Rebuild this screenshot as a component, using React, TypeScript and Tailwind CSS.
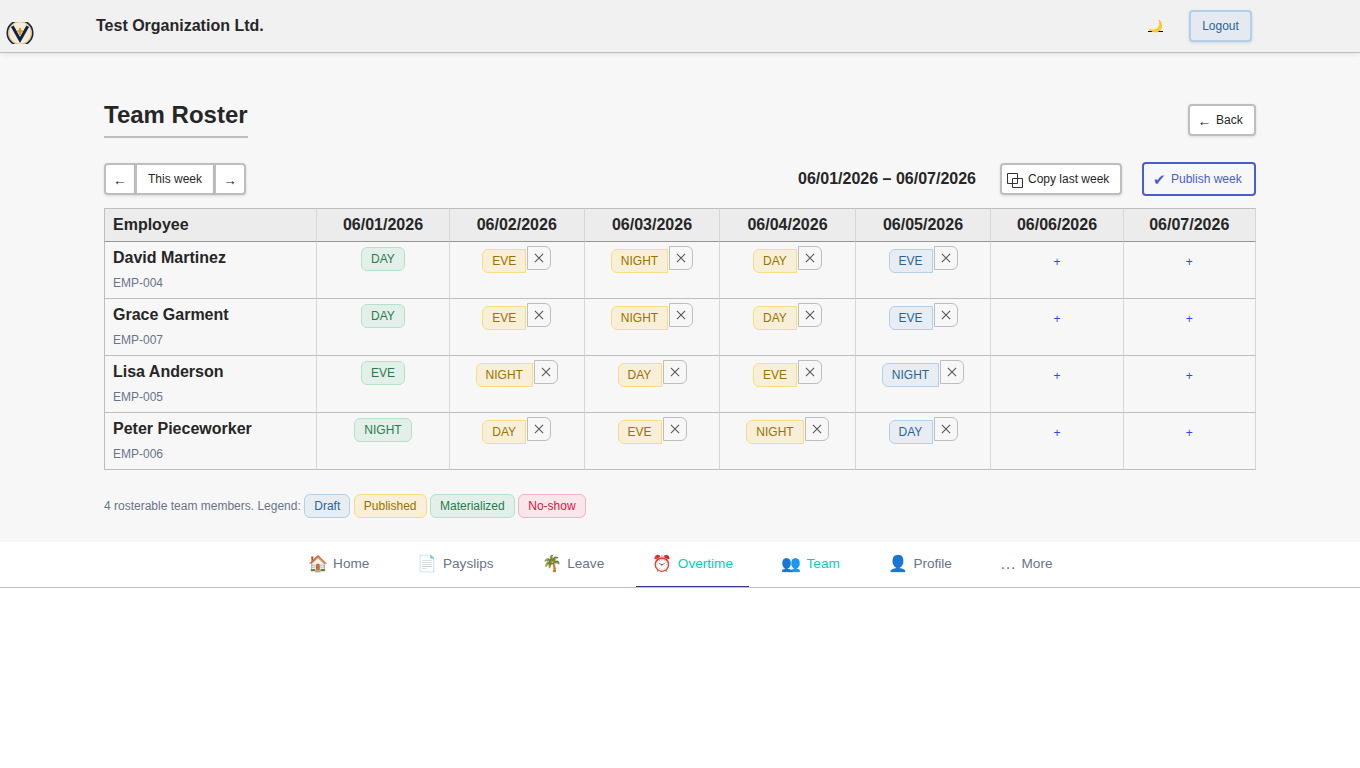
import clsx from 'clsx';
import type { ReactNode } from 'react';

type Status = 'draft' | 'published' | 'materialized' | 'noshow';

interface Shift {
  label: string;
  status: Status;
}

interface Employee {
  name: string;
  id: string;
  shifts: Array<Shift | null>;
}

const badgeStyles: Record<Status, string> = {
  draft: 'border-[#b0d0ec] bg-[#e8edf4] text-[#2a6496]',
  published: 'border-[#fbdc84] bg-[#f8efd9] text-[#9a7200]',
  materialized: 'border-[#b3e2cb] bg-[#e3f0e9] text-[#2a7a50]',
  noshow: 'border-[#f6b3c2] bg-[#f8e7ea] text-[#d9163f]',
};

const columns = [
  { date: '06/01/2026', width: 'w-[133px]', pad: 'p-0' },
  { date: '06/02/2026', width: 'w-[135px]', pad: 'p-0 pr-[0.5px]' },
  { date: '06/03/2026', width: 'w-[135px]', pad: 'p-0' },
  { date: '06/04/2026', width: 'w-[136px]', pad: 'p-0' },
  { date: '06/05/2026', width: 'w-[135px]', pad: 'p-0' },
  { date: '06/06/2026', width: 'w-[133px]', pad: 'p-0' },
  { date: '06/07/2026', width: 'w-[132px]', pad: 'p-0 pr-[0.5px]' },
];

const week = (labels: string[]): Array<Shift | null> => [
  { label: labels[0], status: 'materialized' },
  { label: labels[1], status: 'published' },
  { label: labels[2], status: 'published' },
  { label: labels[3], status: 'published' },
  { label: labels[4], status: 'draft' },
  null,
  null,
];

const employees: Employee[] = [
  { name: 'David Martinez', id: 'EMP-004', shifts: week(['DAY', 'EVE', 'NIGHT', 'DAY', 'EVE']) },
  { name: 'Grace Garment', id: 'EMP-007', shifts: week(['DAY', 'EVE', 'NIGHT', 'DAY', 'EVE']) },
  { name: 'Lisa Anderson', id: 'EMP-005', shifts: week(['EVE', 'NIGHT', 'DAY', 'EVE', 'NIGHT']) },
  { name: 'Peter Pieceworker', id: 'EMP-006', shifts: week(['NIGHT', 'DAY', 'EVE', 'NIGHT', 'DAY']) },
];

const legend: Shift[] = [
  { label: 'Draft', status: 'draft' },
  { label: 'Published', status: 'published' },
  { label: 'Materialized', status: 'materialized' },
  { label: 'No-show', status: 'noshow' },
];

const tabs = [
  { icon: '🏠', label: 'Home' },
  { icon: '📄', label: 'Payslips' },
  { icon: '🌴', label: 'Leave' },
  { icon: '⏰', label: 'Overtime', highlighted: true, active: true },
  { icon: '👥', label: 'Team', highlighted: true },
  { icon: '👤', label: 'Profile' },
  { icon: '…', label: 'More' },
];

function Logo() {
  return (
    <svg width="28" height="22" viewBox="0 0 28 22" className="block">
      <ellipse cx="14" cy="11" rx="12.7" ry="12.5" fill="#f6ead8" stroke="#14284b" strokeWidth="1.7" />
      <ellipse cx="14" cy="11" rx="11.4" ry="11.3" fill="none" stroke="#e2b565" strokeWidth="1" />
      <path d="M6.3 4.2L14 18L21.7 4.2" fill="none" stroke="#0c2448" strokeWidth="3" />
      <path d="M14 6v7M11.2 9.3h5.6" stroke="#d59a2c" strokeWidth="2.2" />
    </svg>
  );
}

function Badge({ label, status, className }: Shift & { className?: string }) {
  return (
    <span
      className={clsx(
        'inline-flex h-6 items-center border px-[9px] text-[12px] leading-none',
        className ?? 'rounded-[6px]',
        badgeStyles[status],
      )}
    >
      {label}
    </span>
  );
}

function ShiftCell({ shift }: { shift: Shift | null }) {
  if (!shift) {
    return <button className="mt-[11px] text-[12px] leading-[18px] text-[#2f45f5]">+</button>;
  }
  if (shift.status === 'materialized') {
    return (
      <div className="flex justify-center pt-[5px]">
        <Badge {...shift} />
      </div>
    );
  }
  return (
    <div className="flex items-start justify-center gap-px pt-1">
      <div className="flex pt-[3px]">
        <Badge {...shift} className={clsx('rounded-l-[6px]', shift.label !== 'NIGHT' && 'w-11')} />
      </div>
      <button className="flex size-6 items-center justify-center rounded-r-[6px] border border-[#bebebe]" aria-label="Remove shift">
        <svg width="10" height="10" viewBox="0 0 10 10" stroke="#555" strokeWidth="1.05">
          <path d="M.9 .9l8.2 8.2M9.1 .9l-8.2 8.2" />
        </svg>
      </button>
    </div>
  );
}

function Button({ className, children }: { className?: string; children: ReactNode }) {
  return (
    <button
      className={clsx(
        'flex h-8 items-center border-2 border-[#bebebe] bg-white text-[12px] leading-none text-[#262626] shadow-[0_1px_3px_rgba(0,0,0,0.12)]',
        className,
      )}
    >
      {children}
    </button>
  );
}

function Header() {
  return (
    <header className="relative flex h-[53px] items-start border-b border-[#bebebe] bg-[#f1f1f1] shadow-[0_1px_4px_rgba(0,0,0,0.1)]">
      <div className="w-24 shrink-0 pl-1.5 pt-[22px]">
        <Logo />
      </div>
      <div className="flex-1 pt-[14px] text-[16px] font-bold leading-6">Test Organization Ltd.</div>
      <button className="mr-[26px] mt-[17px] text-[12px] leading-[18px] text-black underline [text-decoration-skip-ink:none]" aria-label="Toggle theme">
        🌙
      </button>
      <button className="mr-[108px] mt-[10px] h-8 w-[63px] rounded-[4px] border-2 border-[#b0d0ec] bg-[#e5eaf1] text-[12px] text-[#2a6496] shadow-[0_1px_3px_rgba(0,0,0,0.12)]">
        Logout
      </button>
    </header>
  );
}

function RosterTable() {
  return (
    <table className="mt-3 w-[1152px] table-fixed border-separate border-spacing-0">
      <thead>
        <tr className="h-[34px] bg-[#ececec] text-[16px] leading-6">
          <th className="w-[213px] border border-r-[#d6d6d6] border-[#bebebe] border-b-[#959595] px-2 py-0 text-left">Employee</th>
          {columns.map(({ date, width, pad }) => (
            <th key={date} className={clsx(width, pad, 'border-y border-r border-r-[#d6d6d6] border-t-[#bebebe] border-b-[#959595]')}>
              {date}
            </th>
          ))}
        </tr>
      </thead>
      <tbody>
        {employees.map((employee) => (
          <tr key={employee.id} className="h-[57px]">
            <td className="border-x border-b border-[#bebebe] border-r-[#d6d6d6] px-2 pb-0 pt-1 align-top">
              <div className="text-[16px] font-bold leading-6">{employee.name}</div>
              <div className="pt-1 text-[12px] leading-[18px] text-[#69748c]">{employee.id}</div>
            </td>
            {employee.shifts.map((shift, i) => (
              <td
                key={columns[i].date}
                className={clsx(columns[i].pad, 'border-b border-r border-b-[#bebebe] border-r-[#d6d6d6] text-center align-top')}
              >
                <ShiftCell shift={shift} />
              </td>
            ))}
          </tr>
        ))}
      </tbody>
    </table>
  );
}

function TabBar() {
  return (
    <nav className="flex h-[46px] justify-center gap-4 border-b border-[#bebebe] bg-white">
      {tabs.map(({ icon, label, highlighted, active }) => (
        <a
          key={label}
          className={clsx(
            'flex h-[45px] shrink-0 items-center gap-[5.6px] border-b px-4 text-[13.6px]',
            active ? 'border-[#2f3f94]' : 'border-transparent',
            highlighted ? 'text-[#00d1b2]' : 'text-[#69748c]',
          )}
        >
          <span className="text-[16px] leading-none">{icon}</span>
          {label}
        </a>
      ))}
    </nav>
  );
}

export default function App() {
  return (
    <div className="min-h-screen bg-white font-['Liberation_Sans',Arial,sans-serif] text-[#262626]">
      <Header />
      <main className="h-[489px] bg-[#f7f7f7] px-[104px] pt-[44px]">
        <div className="flex items-start justify-between">
          <h1 className="h-[41px] border-b-2 border-[#bebebe] text-[24px] font-bold leading-9">Team Roster</h1>
          <Button className="mt-[7px] w-[68px] rounded-[4px] pl-[7.5px]">
            <span className="mr-[4.5px] pt-0.5 text-[14px]">←</span>
            Back
          </Button>
        </div>

        <div className="mt-6 flex h-[34px] items-center justify-between">
          <div className="flex">
            <Button className="w-8 justify-center rounded-l-[4px]">
              <span className="pt-0.5 text-[14px]">←</span>
            </Button>
            <Button className="-ml-px w-20 justify-center">This week</Button>
            <Button className="-ml-px w-8 justify-center rounded-r-[4px]">
              <span className="pt-0.5 text-[14px]">→</span>
            </Button>
          </div>
          <div className="flex items-center">
            <span className="mr-6 text-[16px] font-bold leading-6">06/01/2026 – 06/07/2026</span>
            <Button className="mr-5 w-[122px] rounded-[4px] pl-[5px]">
              <svg width="16" height="15" viewBox="0 0 16 15" fill="none" stroke="#333" className="mr-[5px] mt-[3px]">
                <path d="M.5 .5h10v10h-10zM5.5 5.5h10v9h-10z" />
              </svg>
              Copy last week
            </Button>
            <button className="flex h-[34px] w-[114px] items-center rounded-[4px] border-2 border-[#485fc7] pl-[9px] text-[12px] leading-none text-[#485fc7]">
              <span className="mr-[5px] text-[15px]">✔</span>
              Publish week
            </button>
          </div>
        </div>

        <RosterTable />

        <div className="mt-6 flex items-center gap-[3.5px] text-[12px] text-[#69748c]">
          <span>4 rosterable team members. Legend:</span>
          {legend.map((item) => (
            <Badge key={item.label} {...item} />
          ))}
        </div>
      </main>
      <TabBar />
    </div>
  );
}
